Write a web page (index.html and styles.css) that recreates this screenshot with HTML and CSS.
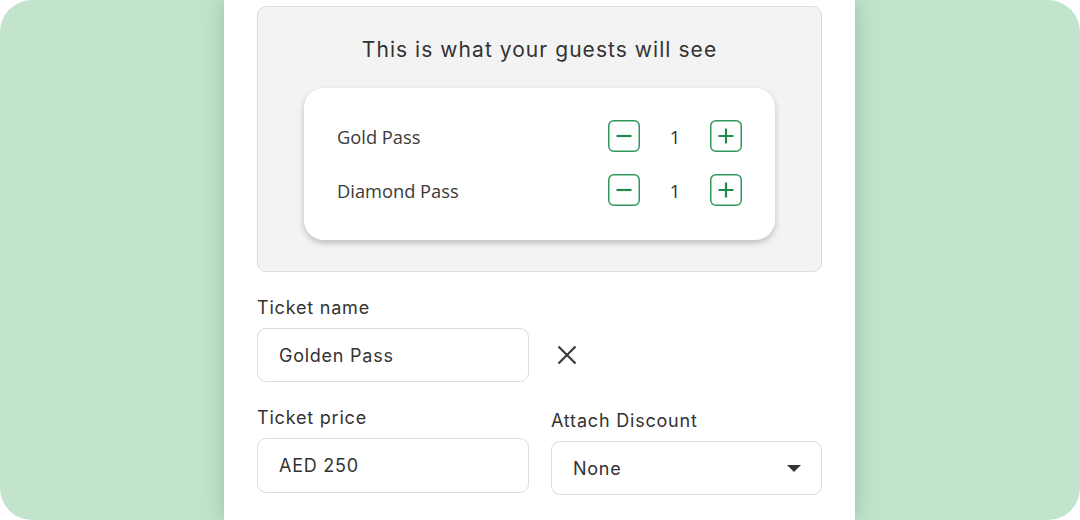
FILE: index.html
```html
<!DOCTYPE html>
<html>
<head>
<meta charset="utf-8">
<link rel="stylesheet" href="styles.css">
</head>
<body>
<div class="frame">
  <div class="panel">
    <div class="preview">
      <h2 class="preview-title">This is what your guests will see</h2>
      <div class="card">
        <div class="row">
          <span class="row-name">Gold Pass</span>
          <div class="stepper">
            <span class="step-btn"><svg viewBox="0 0 32 32" width="32" height="32"><rect x="0.75" y="0.75" width="30.5" height="30.5" rx="5" fill="none" stroke="#2f9a5c" stroke-width="1.5"/><path d="M8.5 16h15" stroke="#1f8a4c" stroke-width="2.2"/></svg></span>
            <span class="step-val">1</span>
            <span class="step-btn"><svg viewBox="0 0 32 32" width="32" height="32"><rect x="0.75" y="0.75" width="30.5" height="30.5" rx="5" fill="none" stroke="#2f9a5c" stroke-width="1.5"/><path d="M8.5 16h15M16 8.5v15" stroke="#1f8a4c" stroke-width="2.2"/></svg></span>
          </div>
        </div>
        <div class="row">
          <span class="row-name">Diamond Pass</span>
          <div class="stepper">
            <span class="step-btn"><svg viewBox="0 0 32 32" width="32" height="32"><rect x="0.75" y="0.75" width="30.5" height="30.5" rx="5" fill="none" stroke="#2f9a5c" stroke-width="1.5"/><path d="M8.5 16h15" stroke="#1f8a4c" stroke-width="2.2"/></svg></span>
            <span class="step-val">1</span>
            <span class="step-btn"><svg viewBox="0 0 32 32" width="32" height="32"><rect x="0.75" y="0.75" width="30.5" height="30.5" rx="5" fill="none" stroke="#2f9a5c" stroke-width="1.5"/><path d="M8.5 16h15M16 8.5v15" stroke="#1f8a4c" stroke-width="2.2"/></svg></span>
          </div>
        </div>
      </div>
    </div>

    <div class="form-grid">
      <div class="field field-name">
        <label class="label">Ticket name</label>
        <div class="input">Golden Pass</div>
      </div>
      <div class="remove">
        <svg viewBox="0 0 20 20" width="20" height="20"><path d="M1.5 1.5L18.5 18.5M18.5 1.5L1.5 18.5" stroke="#3a3a3a" stroke-width="2.2"/></svg>
      </div>
      <div class="field field-price">
        <label class="label">Ticket price</label>
        <div class="input">AED 250</div>
      </div>
      <div class="field field-discount">
        <label class="label">Attach Discount</label>
        <div class="input select"><span>None</span><svg viewBox="0 0 14 7" width="14" height="7"><path d="M0 0h14L7 7z" fill="#333"/></svg></div>
      </div>
    </div>
  </div>
</div>
</body>
</html>
```

FILE: styles.css
```css
* { box-sizing: border-box; }
html, body { margin: 0; padding: 0; background: #ffffff; }
body { width: 1080px; height: 520px; overflow: hidden; font-family: Inter, "Liberation Sans", sans-serif; color: #333; }

.frame {
  width: 1080px;
  height: 520px;
  background: #c2e4cd;
  border-radius: 32px;
  display: flex;
  overflow: hidden;
}

.panel {
  width: 631px;
  height: 520px;
  margin-left: 224px;
  background: #fff;
  box-shadow: 0 0 22px rgba(40, 90, 60, 0.28);
  padding: 6px 33px 0 33px;
}

.preview {
  height: 266px;
  background: #f3f3f3;
  border: 1px solid #dcdcdc;
  border-radius: 9px;
  padding: 0 46px;
}

.preview-title {
  margin: 0;
  height: 81px;
  padding-top: 28px;
  text-align: center;
  font-size: 21px;
  font-weight: 400;
  line-height: 30px;
  color: #333;
  letter-spacing: 1.05px;
}

.card {
  height: 152px;
  background: #fff;
  border-radius: 20px;
  box-shadow: 0 3px 6px rgba(0, 0, 0, 0.22);
  padding: 32px 33px 0 33px;
  display: flex;
  flex-direction: column;
  gap: 22px;
}

.row {
  height: 32px;
  display: flex;
  align-items: center;
  justify-content: space-between;
}

.row-name {
  font-family: "Open Sans", "Noto Sans", sans-serif;
  font-size: 18.3px;
  color: #3a3a3a;
}

.stepper {
  display: flex;
  align-items: center;
}

.step-btn { display: block; width: 32px; height: 32px; }
.step-btn svg { display: block; }

.step-val {
  width: 70px;
  text-align: center;
  font-family: "Open Sans", "Noto Sans", sans-serif;
  font-size: 18.5px;
  color: #333;
}

.form-grid {
  display: grid;
  grid-template-columns: 272px 271px;
  column-gap: 22px;
  margin-top: 24px;
}

.field { display: flex; flex-direction: column; }

.label {
  font-size: 18px;
  line-height: 24px;
  color: #333;
  height: 32px;
  letter-spacing: 0.8px;
}

.input {
  height: 54px;
  border: 1px solid #dcdcdc;
  border-radius: 9px;
  padding: 0 21px;
  display: flex;
  align-items: center;
  font-size: 18px;
  letter-spacing: 0.75px;
  color: #333;
  background: #fff;
}

.remove {
  display: flex;
  align-items: flex-end;
  padding: 0 0 17px 6px;
}
.remove svg { display: block; }

.field-price { margin-top: 24px; }
.field-price .input { height: 55px; }
.field-discount { margin-top: 27px; }

.select { justify-content: space-between; padding-right: 20px; }
.select svg { display: block; }
```
